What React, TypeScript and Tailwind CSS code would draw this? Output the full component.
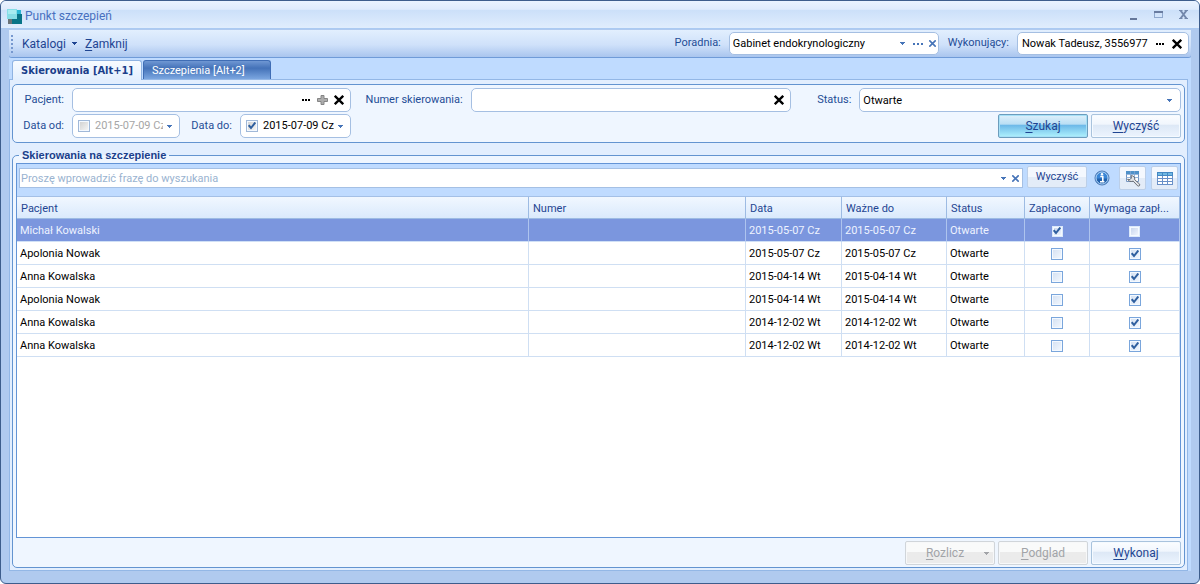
import React, { useState } from "react";

type Row = {
  patient: string;
  date: string;
  valid: string;
  paid: boolean;
  needs: boolean;
};

const rows: Row[] = [
  { patient: "Michał Kowalski", date: "2015-05-07 Cz", valid: "2015-05-07 Cz", paid: true, needs: false },
  { patient: "Apolonia Nowak", date: "2015-05-07 Cz", valid: "2015-05-07 Cz", paid: false, needs: true },
  { patient: "Anna Kowalska", date: "2015-04-14 Wt", valid: "2015-04-14 Wt", paid: false, needs: true },
  { patient: "Apolonia Nowak", date: "2015-04-14 Wt", valid: "2015-04-14 Wt", paid: false, needs: true },
  { patient: "Anna Kowalska", date: "2014-12-02 Wt", valid: "2014-12-02 Wt", paid: false, needs: true },
  { patient: "Anna Kowalska", date: "2014-12-02 Wt", valid: "2014-12-02 Wt", paid: false, needs: true },
];

const Caret = () => (
  <svg width="5" height="3" viewBox="0 0 5 3" shapeRendering="crispEdges" fill="currentColor" aria-hidden="true">
    <path d="M0 0h5v1H4v1H3v1H2V2H1V1H0z" />
  </svg>
);

const Dots = ({ wide = false }: { wide?: boolean }) =>
  wide ? (
    <svg width="11" height="2" viewBox="0 0 11 2" shapeRendering="crispEdges" fill="currentColor" aria-hidden="true">
      <path d="M0 0h2v2H0zM4 0h2v2H4zM8 0h2v2H8z" />
    </svg>
  ) : (
    <svg width="8" height="2" viewBox="0 0 8 2" shapeRendering="crispEdges" fill="currentColor" aria-hidden="true">
      <path d="M0 0h2v2H0zM3 0h2v2H3zM6 0h2v2H6z" />
    </svg>
  );

const Cross = () => (
  <svg width="10" height="10" viewBox="0 0 10 10" stroke="currentColor" strokeWidth="2.3" fill="none" aria-hidden="true">
    <path d="M0.8 0.8L9.2 9.2M9.2 0.8L0.8 9.2" />
  </svg>
);

const SmallCross = () => (
  <svg width="7" height="7" viewBox="0 0 7 7" stroke="currentColor" strokeWidth="1.6" fill="none" aria-hidden="true">
    <path d="M0.3 0.3L6.7 6.7M6.7 0.3L0.3 6.7" />
  </svg>
);

const Plus = () => (
  <svg width="11" height="10" viewBox="0 0 11 10" aria-hidden="true">
    <path d="M4 .5h3v3h3.500v3H7v3H4v-3H.5v-3H4z" fill="#adadad" stroke="#858585" />
  </svg>
);

function IconButton({ label, className = "", children }: { label: string; className?: string; children: React.ReactNode }) {
  return (
    <button type="button" aria-label={label} className={`flex shrink-0 items-center justify-center ${className}`}>
      {children}
    </button>
  );
}

function Check({ label, checked, tone = "blue" }: { label: string; checked: boolean; tone?: "blue" | "gray" | "light" }) {
  const [on, setOn] = useState(checked);
  const box =
    tone === "gray"
      ? "size-3 border-[#a0b8d8] from-[#cfcfcf] to-[#f8f8f8]"
      : tone === "light"
        ? "size-[11px] border-[#dbe9fb] from-[#c3d2ec] to-[#f5f9ff]"
        : "size-3 border-[#7aa6dc] from-[#d3e0f2] to-[#f4f9ff]";
  return (
    <span className="inline-grid shrink-0 place-items-center align-middle">
      <input
        type="checkbox"
        aria-label={label}
        checked={on}
        onChange={(e) => setOn(e.target.checked)}
        className={`peer col-start-1 row-start-1 appearance-none border bg-linear-to-br shadow-[inset_0_0_0_1px_#f4f9ff] ${box}`}
      />
      <svg
        width="8"
        height="8"
        viewBox="0 0 8 8"
        fill="none"
        stroke="#2f5f9f"
        strokeWidth="2"
        className="pointer-events-none invisible col-start-1 row-start-1 peer-checked:visible"
        aria-hidden="true"
      >
        <path d="M0.700 3.200L3 6L7.300 0.500" />
      </svg>
    </span>
  );
}

const field = "flex min-w-0 items-center rounded-[5px] border border-[#a5bfe2] bg-white";
const label = "pr-2 text-right whitespace-nowrap text-[#1f4d96]";
const pushButton =
  "flex h-6 w-[90px] items-center justify-center rounded-[2px] border border-[#a9c3dd] bg-[linear-gradient(#fbfdff,#f1f6fd_42%,#dde8f6_46%,#ecf4fe)] text-xs text-[#1f4592] shadow-[inset_0_0_0_1px_#f5faff]";
const disabledButton =
  "flex h-6 w-[90px] items-center justify-center rounded-[2px] border border-[#d0d5da] bg-linear-to-b from-[#f9fafa] from-45% to-[#ebebeb] to-45% text-xs text-[#a2a4a8] shadow-[inset_0_0_0_1px_#f7f8f9]";
const toolButton = "rounded-[2px] border border-[#bccfe8] bg-linear-to-b from-[#f4f8fe] from-50% to-[#e3ecf8] to-50%";
const th = "truncate border-t border-r border-b border-[#9dbbe3] border-t-[#a4c0e6] pt-0.5 pl-1 text-left font-normal";
const td = "truncate border-r border-b pt-0.5";

function DateField({ id, value, checked, name }: { id: string; value: string; checked: boolean; name: string }) {
  return (
    <div className={`${field} h-6 pl-[5px] pr-1 ${checked ? "w-[111px]" : "w-[108px]"}`}>
      <Check label={name} checked={checked} tone="gray" />
      <input
        id={id}
        defaultValue={value}
        className={`ml-[5px] min-w-0 flex-1 bg-transparent outline-none ${checked ? "text-black" : "text-[#a6a6a6]"}`}
      />
      <IconButton label="Kalendarz" className="w-3 text-[#4674b8]">
        <Caret />
      </IconButton>
    </div>
  );
}

export default function App() {
  return (
    <div className="flex min-h-screen flex-col overflow-hidden rounded-md border border-[#3d5d8c] bg-[#b0caef] font-[Roboto,'Liberation_Sans',sans-serif] text-[11px] leading-[14px] text-[#1f4592]">
      <header className="flex h-7 shrink-0 items-center border-b border-[#abcaf2] bg-[linear-gradient(#eaf3ff,#deebfc_31%,#cce0f9_34%,#e0edfd)] pl-1.5">
        <svg width="16" height="16" viewBox="0 0 16 16" className="mt-1" aria-hidden="true">
          <path d="M9 1h5v4H9z" fill="#2bb6d3" />
          <path d="M5 5h10v10H5z" fill="#087487" />
          <path d="M1 10h4v5H1z" fill="#6b7378" />
          <path d="M0 0h10v10H0z" fill="#86dde6" />
          <path d="M1 1h8v4H1z" fill="#a6ebf0" />
        </svg>
        <h1 className="ml-0.5 pt-0.5 text-xs text-[#4870bf]">Punkt szczepień</h1>
        <div className="ml-auto flex items-center gap-4 pr-[11px]">
          <IconButton label="Minimalizuj" className="h-3 w-[9px] items-end pb-px">
            <svg width="7" height="2" aria-hidden="true">
              <path d="M0 0h7v2H0z" fill="#66789a" />
            </svg>
          </IconButton>
          <IconButton label="Maksymalizuj" className="h-3 w-[9px]">
            <svg width="9" height="7" viewBox="0 0 9 7" shapeRendering="crispEdges" aria-hidden="true">
              <path d="M.5.5h8v6h-8z" fill="none" stroke="#8fa8cd" />
              <path d="M0 0h9v2H0z" fill="#697ca0" />
            </svg>
          </IconButton>
          <IconButton label="Zamknij okno" className="h-3 w-[9px]">
            <svg width="9" height="9" viewBox="0 0 9 9" aria-hidden="true">
              <path d="M1.500.5l6 8M7.500.5l-6 8" stroke="#7388ac" strokeWidth="1.900" />
              <path d="M0 .5h3.500M5.500.5H9M0 8.500h3.500M5.500 8.500H9" stroke="#7388ac" />
            </svg>
          </IconButton>
        </div>
      </header>

      <div className="flex flex-1 flex-col px-2 pt-px pb-3">
        <div className="flex h-7 shrink-0 items-center rounded-b-[3px] border-b border-[#6f9bd8] bg-linear-to-b from-[#e2effe] from-0% via-[#cfe1fa] via-55% to-[#a9c5ee] pr-[2px] pl-[2px] text-xs">
          <svg width="2" height="20" viewBox="0 0 2 20" shapeRendering="crispEdges" aria-hidden="true">
            <path d="M0 1h2v2H0zM0 5h2v2H0zM0 9h2v2H0zM0 13h2v2H0zM0 17h2v2H0z" fill="#7698cf" />
          </svg>
          <button type="button" className="ml-[9px] flex items-center gap-1.5">
            Katalogi
            <Caret />
          </button>
          <button type="button" className="ml-2">
            <span className="underline underline-offset-2">Z</span>amknij
          </button>
          <div className="ml-auto flex items-center text-[11px]">
            <label htmlFor="clinic" className={label}>
              Poradnia:
            </label>
            <div className={`${field} h-[23px] w-[210px] text-[#4674b8]`}>
              <select id="clinic" className="min-w-0 flex-1 appearance-none bg-transparent pt-px pl-[3px] text-black outline-none">
                <option>Gabinet endokrynologiczny</option>
              </select>
              <span className="pointer-events-none mr-2">
                <Caret />
              </span>
              <IconButton label="Wybierz poradnię" className="mr-[5px]">
                <Dots wide />
              </IconButton>
              <IconButton label="Wyczyść poradnię" className="mr-[2px]">
                <SmallCross />
              </IconButton>
            </div>
            <label htmlFor="doctor" className={`${label} pl-[9px]`}>
              Wykonujący:
            </label>
            <div className={`${field} h-[23px] w-[172px] text-black`}>
              <input
                id="doctor"
                defaultValue="Nowak Tadeusz, 3556977"
                className="min-w-0 flex-1 bg-transparent pt-px pl-1 outline-none"
              />
              <IconButton label="Wybierz wykonującego" className="mr-2">
                <Dots />
              </IconButton>
              <IconButton label="Wyczyść wykonującego" className="mr-1.5">
                <Cross />
              </IconButton>
            </div>
          </div>
        </div>

        <main className="flex flex-1 flex-col bg-[#bfdbff]">
          <div role="tablist" className="flex h-[21px] shrink-0 items-end gap-px pl-[3px]">
            <button
              type="button"
              role="tab"
              aria-selected="true"
              className="z-10 -mb-px h-5 w-[130px] rounded-t-[3px] border border-b-0 border-[#8fb3e2] bg-linear-to-b from-[#f7fbff] to-[#e3effe] font-['DejaVu_Sans_Condensed',sans-serif] font-bold whitespace-nowrap text-[#1a3f8b]"
            >
              Skierowania [Alt+1]
            </button>
            <button
              type="button"
              role="tab"
              aria-selected="false"
              className="h-[19px] w-32 rounded-t-[3px] border border-b-0 border-[#3f6db5] bg-linear-to-b from-[#6f97d3] from-0% via-[#4472b8] via-40% to-[#7ba6e0] pt-0.5 pl-2 text-left whitespace-nowrap text-white"
            >
              Szczepienia [Alt+2]
            </button>
          </div>

          <div className="mr-[3px] flex flex-1 flex-col border border-[#93b7e6] bg-[#e2eefe] px-[2px] pt-1 pb-[2px]">
            <section className="flex flex-col gap-[2px] rounded-[5px] border border-[#6394d0] bg-[#eff6ff] pt-[3px] pr-[3px] pb-1">
              <div className="grid grid-cols-[59px_279fr_120px_321fr_68px_322fr] items-center">
                <label htmlFor="patient" className={label}>
                  Pacjent:
                </label>
                <div className={`${field} h-6 text-black`}>
                  <input id="patient" className="min-w-0 flex-1 bg-transparent pl-1 outline-none" />
                  <IconButton label="Wybierz pacjenta" className="mr-[7px]">
                    <Dots />
                  </IconButton>
                  <IconButton label="Dodaj pacjenta" className="mr-1.5">
                    <Plus />
                  </IconButton>
                  <IconButton label="Wyczyść pacjenta" className="mr-1.5">
                    <Cross />
                  </IconButton>
                </div>
                <label htmlFor="number" className={label}>
                  Numer skierowania:
                </label>
                <div className={`${field} h-6 text-black`}>
                  <input id="number" className="min-w-0 flex-1 bg-transparent pl-1 outline-none" />
                  <IconButton label="Wyczyść numer" className="mr-1.5">
                    <Cross />
                  </IconButton>
                </div>
                <label htmlFor="status" className={label}>
                  Status:
                </label>
                <div className={`${field} h-6 text-[#4674b8]`}>
                  <select id="status" className="min-w-0 flex-1 appearance-none bg-transparent pt-px pl-[3px] text-black outline-none">
                    <option>Otwarte</option>
                  </select>
                  <span className="pointer-events-none mr-2">
                    <Caret />
                  </span>
                </div>
              </div>
              <div className="flex items-center">
                <label htmlFor="from" className={`${label} w-[59px]`}>
                  Data od:
                </label>
                <DateField id="from" name="Użyj daty od" value="2015-07-09 Cz" checked={false} />
                <label htmlFor="to" className={`${label} w-[60px]`}>
                  Data do:
                </label>
                <DateField id="to" name="Użyj daty do" value="2015-07-09 Cz" checked />
                <div className="ml-auto flex gap-[3px]">
                  <button
                    type="button"
                    className="flex h-6 w-[90px] items-center justify-center rounded-[2px] border border-[#6c9dbd] bg-[linear-gradient(#dff1fb,#b9def4_42%,#6cb8e8_46%,#aff2fd)] text-xs text-[#1f4592] shadow-[inset_0_0_0_1px_#a6e0f7]"
                  >
                    <span className="underline underline-offset-2">S</span>zukaj
                  </button>
                  <button type="button" className={pushButton}>
                    <span className="underline underline-offset-2">W</span>yczyść
                  </button>
                </div>
              </div>
            </section>

            <section
              aria-labelledby="list-title"
              className="mt-3 flex flex-1 flex-col rounded-[5px] border border-[#6394d0] bg-[#eff6ff] px-[3px] pb-[2px]"
            >
              <h2
                id="list-title"
                className="-mt-2 ml-[3px] self-start bg-linear-to-b from-[#e2eefe] from-50% to-[#eff6ff] to-50% px-[3px] font-['Liberation_Sans',sans-serif] font-bold text-[#1a3f8b]"
              >
                Skierowania na szczepienie
              </h2>
              <div className="mt-px flex flex-1 flex-col border border-[#6394d6] bg-white">
                <div className="flex h-8 shrink-0 items-start bg-[#bfdbff] pt-[2px] pr-[2px] pl-[2px]">
                  <div className="mt-0.5 flex h-5 min-w-0 flex-1 items-center border border-[#a5c0e4] bg-white text-[#4674b8]">
                    <input
                      aria-label="Wyszukiwanie"
                      placeholder="Proszę wprowadzić frazę do wyszukania"
                      className="min-w-0 flex-1 pt-px pl-px text-black outline-none placeholder:text-[#9ab3d0]"
                    />
                    <IconButton label="Historia wyszukiwania" className="mr-1.5">
                      <Caret />
                    </IconButton>
                    <IconButton label="Usuń frazę" className="mr-[3px]">
                      <SmallCross />
                    </IconButton>
                  </div>
                  <button type="button" className={`ml-1 h-[22px] w-[60px] ${toolButton}`}>
                    Wyczyść
                  </button>
                  <IconButton label="Informacje" className="ml-[7px] h-6 w-4">
                    <svg width="16" height="16" viewBox="0 0 16 16" aria-hidden="true">
                      <circle cx="8" cy="8" r="7" fill="#3b86d6" stroke="#4d77b0" />
                      <path d="M2.200 8.500a5.800 5.800 0 0 0 11.600 0z" fill="#2161ad" />
                      <circle cx="8" cy="8" r="6" fill="none" stroke="#b5d6f5" />
                      <path d="M6.300 6.500H8.800v5M6 11.700h4.400" stroke="#fff" strokeWidth="1.600" fill="none" />
                      <circle cx="8" cy="4.200" r="1.200" fill="#fff" />
                    </svg>
                  </IconButton>
                  <IconButton label="Ustawienia tabeli" className={`ml-[9px] h-6 w-[27px] ${toolButton}`}>
                    <svg width="17" height="17" viewBox="0 0 17 17" aria-hidden="true">
                      <path d="M2.500 1.500h12v10h-12z" fill="#fff" stroke="#7595c0" />
                      <path d="M2 1h13v3H2z" fill="#4f91c9" />
                      <path d="M6.500 1v10M10.500 1v10M2 4.500h13M2 7.500h13" stroke="#7ea5d3" strokeWidth=".8" />
                      <path
                        d="M3.600 9.200L5.900 9.600 7.400 8.100 7 5.700C9.500 5.500 11.300 7.300 10.700 9.700L15.600 14.100C16.300 15.400 15 16.600 13.700 15.900L9.200 11.200C6.800 12 4.200 11.200 3.600 9.200z"
                        fill="#e1e3e7"
                        stroke="#5c6067"
                        strokeWidth=".9"
                      />
                    </svg>
                  </IconButton>
                  <IconButton label="Widok tabeli" className={`ml-[5px] h-6 w-[27px] ${toolButton}`}>
                    <svg width="16" height="13" viewBox="0 0 16 13" shapeRendering="crispEdges" aria-hidden="true">
                      <path d="M0 0h16v13H0z" fill="#6990c8" />
                      <path d="M0 0h16v4H0z" fill="#4388c4" />
                      <path d="M1 1h4v2H1zM6 1h4v2H6zM11 1h4v2h-4z" fill="#71b8e2" />
                      <path d="M1 4h4v2H1zM6 4h4v2H6zM11 4h4v2h-4zM1 7h4v2H1zM6 7h4v2H6zM11 7h4v2h-4zM1 10h4v2H1zM6 10h4v2H6zM11 10h4v2h-4z" fill="#fff" />
                    </svg>
                  </IconButton>
                </div>
                <table className="w-full table-fixed border-separate border-spacing-0">
                  <colgroup>
                    <col />
                    <col className="w-[217px]" />
                    <col className="w-24" />
                    <col className="w-[105px]" />
                    <col className="w-[78px]" />
                    <col className="w-[65px]" />
                    <col className="w-[90px]" />
                  </colgroup>
                  <thead>
                    <tr className="h-[23px] bg-linear-to-b from-[#f2f8ff] to-[#d9e9fc]">
                      {["Pacjent", "Numer", "Data", "Ważne do", "Status", "Zapłacono", "Wymaga zapł..."].map((h) => (
                        <th key={h} scope="col" className={th}>
                          {h}
                        </th>
                      ))}
                    </tr>
                  </thead>
                  <tbody>
                    {rows.map((r, i) => {
                      const selected = i === 0;
                      const cell = `${td} ${selected ? "border-r-[#aec4ee] border-b-[#d0e0f6]" : "border-[#cfdff3]"}`;
                      return (
                        <tr key={i} className={`h-[23px] ${selected ? "bg-[#7b96de] text-[#eef3ff]" : "text-black"}`}>
                          <td className={`${cell} pl-[3px]`}>{r.patient}</td>
                          <td className={cell} />
                          <td className={`${cell} pl-[3px]`}>{r.date}</td>
                          <td className={`${cell} pl-[3px]`}>{r.valid}</td>
                          <td className={`${cell} pl-[3px]`}>Otwarte</td>
                          <td className={`${cell} text-center leading-none`}>
                            <Check label="Zapłacono" checked={r.paid} tone={selected ? "light" : "blue"} />
                          </td>
                          <td className={`${cell} text-center leading-none`}>
                            <Check label="Wymaga zapłaty" checked={r.needs} tone={selected ? "light" : "blue"} />
                          </td>
                        </tr>
                      );
                    })}
                  </tbody>
                </table>
              </div>
              <footer className="flex shrink-0 justify-end gap-[3px] pt-[3px]">
                <button type="button" disabled className={disabledButton}>
                  <span className="flex-1">
                    <span className="underline underline-offset-2">R</span>ozlicz
                  </span>
                  <span className="pr-[5px]">
                    <Caret />
                  </span>
                </button>
                <button type="button" disabled className={disabledButton}>
                  <span className="underline underline-offset-2">P</span>odglad
                </button>
                <button type="button" className={pushButton}>
                  <span className="underline underline-offset-2">W</span>ykonaj
                </button>
              </footer>
            </section>
          </div>
        </main>
      </div>
    </div>
  );
}
